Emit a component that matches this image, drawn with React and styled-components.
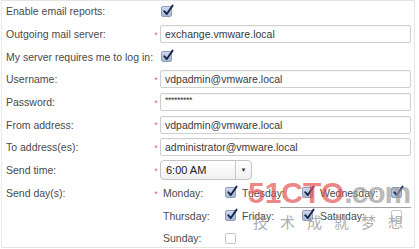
import React from 'react';
import styled, { createGlobalStyle } from 'styled-components';

const GlobalStyle = createGlobalStyle`
  * { box-sizing: border-box; }
  html, body {
    margin: 0;
    padding: 0;
    background: #fff;
    font-family: "Liberation Sans", Arial, Helvetica, sans-serif;
  }
`;

const Panel = styled.div`
  position: relative;
  width: 414px;
  height: 248px;
  margin-left: 1px;
  border: 1px solid #e4e4e4;
  border-left-color: #eaeaea;
  overflow: hidden;
`;

const Form = styled.div`
  display: grid;
  grid-template-columns: 146px 8px 251px;
  grid-auto-rows: 22.7px;
  padding-left: 4px;
  margin-top: -1px;
  align-items: center;
  color: #4a4a4a;
  font-size: 10.5px;
`;

const Label = styled.div`
  white-space: nowrap;
  ${(p) => p.$span && `grid-row: span ${p.$span}; align-self: start; padding-top: 5px;`}
`;

const Req = styled.div`
  color: #e06a7a;
  font-size: 9px;
  text-align: center;
  line-height: 1;
  padding-top: 2px;
  ${(p) => p.$span && `grid-row: span ${p.$span}; align-self: start; padding-top: 8px;`}
`;

const Cell = styled.div`
  display: flex;
  align-items: center;
  ${(p) => p.$span && `grid-row: span ${p.$span}; align-self: stretch;`}
`;

const Input = styled.div`
  width: 251px;
  height: 18px;
  border: 1px solid #cfcfcf;
  border-radius: 2px;
  padding: 0 4px;
  display: flex;
  align-items: center;
  color: #3a3a3a;
  font-size: 10.5px;
  background: #fff;
  box-shadow: inset 0 1px 1px rgba(0, 0, 0, 0.04);
`;

const Dots = styled.span`
  font-size: 9px;
  letter-spacing: -0.5px;
  margin-top: -5px;
`;

const Select = styled.div`
  width: 92px;
  height: 20px;
  border: 1px solid #c4c4c4;
  border-radius: 4px;
  display: flex;
  background: linear-gradient(#ffffff, #f0f0f0);
  color: #222;
  font-size: 11px;
`;

const SelectValue = styled.div`
  flex: 1;
  display: flex;
  align-items: center;
  padding-left: 5px;
  border-right: 1px solid #c8c8c8;
`;

const SelectArrow = styled.div`
  width: 15px;
  display: flex;
  align-items: center;
  justify-content: center;
  font-size: 6px;
  color: #333;
`;

const BoxWrap = styled.span`
  width: 11px;
  height: 11px;
  display: inline-flex;
  border: 1px solid ${(p) => (p.$on ? '#8d9dba' : '#c6c6c6')};
  border-radius: 2px;
  background: ${(p) => (p.$on ? 'linear-gradient(#cfdaeb, #a7b9d6)' : '#fff')};
  position: relative;
  margin-left: 1px;
`;

const Check = ({ on }) => (
  <BoxWrap $on={on}>
    {on && (
      <svg width="12" height="12" viewBox="0 0 12 12" style={{ position: 'absolute', left: 0, top: -3 }}>
        <path d="M2.2 7.2 L4.8 10 L10.6 1.6" fill="none" stroke="#1a2850" strokeWidth="1.9" strokeLinecap="round" strokeLinejoin="round" />
      </svg>
    )}
  </BoxWrap>
);

const Days = styled.div`
  display: grid;
  grid-template-columns: 61px 18px 59px 19px 70px 12px;
  grid-auto-rows: 22.7px;
  align-items: center;
  padding-left: 3px;
  align-self: stretch;
`;

const DayLabel = styled.div`
  white-space: nowrap;
`;

const Watermark = styled.div`
  position: absolute;
  left: 246px;
  top: 176px;
  width: 168px;
  pointer-events: none;
`;

const Brand = styled.div`
  display: flex;
  align-items: baseline;
  font-family: "Liberation Sans", Arial, sans-serif;
  font-weight: bold;
  font-size: 30px;
  line-height: 32px;
  white-space: nowrap;
  opacity: 0.68;
`;

const BrandRed = styled.span`
  color: #e4504e;
`;

const BrandGrey = styled.span`
  color: #9a9a9a;
  letter-spacing: -1px;
`;

const Rule = styled.div`
  height: 1px;
  background: #8a8a8a;
  margin-left: 32px;
  margin-right: 5px;
  margin-top: -2px;
  opacity: 0.8;
`;

const Motto = styled.div`
  font-family: "Noto Sans CJK SC", sans-serif;
  font-size: 15px;
  color: #a0a0a0;
  letter-spacing: 12px;
  margin-left: 5px;
  margin-top: 6px;
  line-height: 16px;
  white-space: nowrap;
  opacity: 0.85;
`;

function App() {
  return (
    <>
      <GlobalStyle />
      <Panel>
        <Form>
          <Label>Enable email reports:</Label>
          <Req />
          <Cell><Check on /></Cell>

          <Label>Outgoing mail server:</Label>
          <Req>*</Req>
          <Cell><Input>exchange.vmware.local</Input></Cell>

          <Label>My server requires me to log in:</Label>
          <Req />
          <Cell><Check on /></Cell>

          <Label>Username:</Label>
          <Req>*</Req>
          <Cell><Input>vdpadmin@vmware.local</Input></Cell>

          <Label>Password:</Label>
          <Req>*</Req>
          <Cell><Input><Dots>*********</Dots></Input></Cell>

          <Label>From address:</Label>
          <Req>*</Req>
          <Cell><Input>vdpadmin@vmware.local</Input></Cell>

          <Label>To address(es):</Label>
          <Req>*</Req>
          <Cell><Input>administrator@vmware.local</Input></Cell>

          <Label>Send time:</Label>
          <Req>*</Req>
          <Cell>
            <Select>
              <SelectValue>6:00 AM</SelectValue>
              <SelectArrow>▼</SelectArrow>
            </Select>
          </Cell>

          <Label $span={3}>Send day(s):</Label>
          <Req $span={3}>*</Req>
          <Cell $span={3}>
            <Days>
              <DayLabel>Monday:</DayLabel>
              <Check on />
              <DayLabel>Tuesday:</DayLabel>
              <Check on />
              <DayLabel>Wednesday:</DayLabel>
              <Check on />
              <DayLabel>Thursday:</DayLabel>
              <Check on />
              <DayLabel>Friday:</DayLabel>
              <Check on />
              <DayLabel>Saturday:</DayLabel>
              <Check />
              <DayLabel>Sunday:</DayLabel>
              <Check />
            </Days>
          </Cell>
        </Form>
        <Watermark>
          <Brand>
            <BrandRed>51CTO</BrandRed>
            <BrandGrey>.com</BrandGrey>
          </Brand>
          <Rule />
          <Motto>技术成就梦想</Motto>
        </Watermark>
      </Panel>
    </>
  );
}

export default App;
